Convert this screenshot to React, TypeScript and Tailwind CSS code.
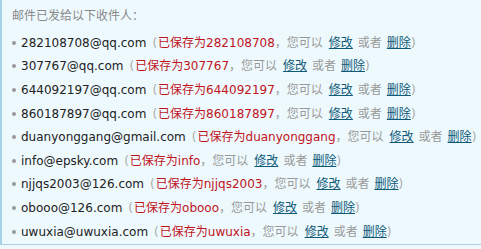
const rows = [
  { email: '282108708@qq.com', name: '282108708' },
  { email: '307767@qq.com', name: '307767' },
  { email: '644092197@qq.com', name: '644092197' },
  { email: '860187897@qq.com', name: '860187897' },
  { email: 'duanyonggang@gmail.com', name: 'duanyonggang' },
  { email: 'info@epsky.com', name: 'info' },
  { email: 'njjqs2003@126.com', name: 'njjqs2003' },
  { email: 'obooo@126.com', name: 'obooo' },
  { email: 'uwuxia@uwuxia.com', name: 'uwuxia' },
];

export default function App() {
  return (
    <div
      className="w-[481px] h-[249px] bg-[#eef9fe] text-[12px]"
      style={{ fontFamily: '"DejaVu Sans", Verdana, "Noto Sans CJK SC", sans-serif' }}
    >
      <div className="h-[245px] border-l-2 border-b border-[#a8d3e6] pl-[10px]">
        <div className="pt-[4px] leading-[24px] text-[#888]">邮件已发给以下收件人：</div>
        <ul className="mt-[3px]">
          {rows.map((r) => (
            <li key={r.email} className="flex items-center h-[23.6px] whitespace-nowrap">
              <span className="w-[4px] h-[4px] rounded-full bg-[#999] mr-[5px]" />
              <span className="text-[#222]">{r.email}</span>
              <span className="text-[#aaa] ml-[6px] mr-[1px]">(</span>
              <span className="text-[#c0141c]">已保存为{r.name}</span>
              <span className="text-[#999]">，您可以</span>
              <a href="#" className="text-[#0e5a78] underline ml-[6px]">修改</a>
              <span className="text-[#999] mx-[5px]">或者</span>
              <a href="#" className="text-[#0e5a78] underline">删除</a>
              <span className="text-[#aaa]">)</span>
            </li>
          ))}
        </ul>
      </div>
    </div>
  );
}
